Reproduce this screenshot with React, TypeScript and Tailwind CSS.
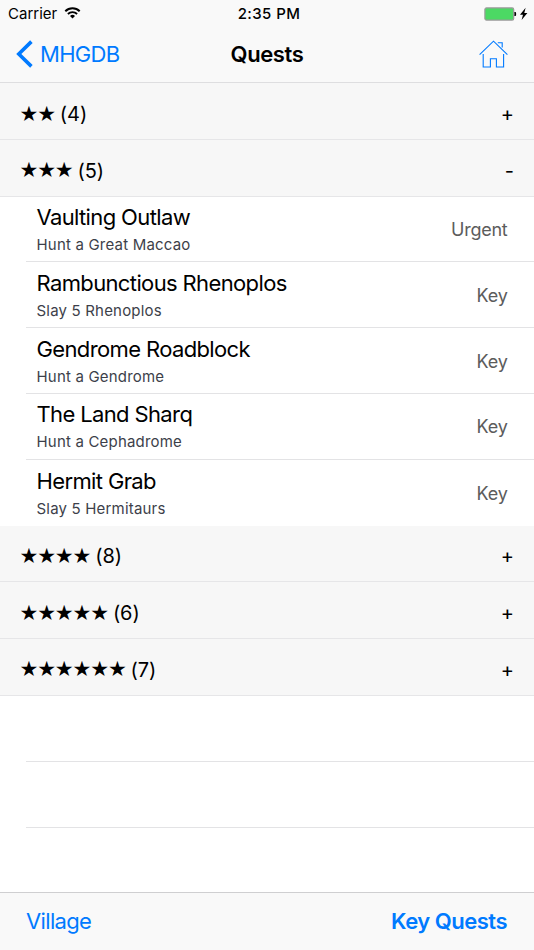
import React, { useState } from 'react';

interface Quest {
  name: string;
  goal: string;
  type: 'Key' | 'Urgent';
}

interface Section {
  stars: number;
  count: number;
  quests: Quest[];
}

const sections: Section[] = [
  { stars: 2, count: 4, quests: [] },
  {
    stars: 3,
    count: 5,
    quests: [
      { name: 'Vaulting Outlaw', goal: 'Hunt a Great Maccao', type: 'Urgent' },
      { name: 'Rambunctious Rhenoplos', goal: 'Slay 5 Rhenoplos', type: 'Key' },
      { name: 'Gendrome Roadblock', goal: 'Hunt a Gendrome', type: 'Key' },
      { name: 'The Land Sharq', goal: 'Hunt a Cephadrome', type: 'Key' },
      { name: 'Hermit Grab', goal: 'Slay 5 Hermitaurs', type: 'Key' },
    ],
  },
  { stars: 4, count: 8, quests: [] },
  { stars: 5, count: 6, quests: [] },
  { stars: 6, count: 7, quests: [] },
];

const StatusBar: React.FC = () => (
  <div className="grid h-[27px] grid-cols-3 items-center pl-2 pr-[6px] text-[15px] leading-none">
    <div className="flex items-center gap-[7px]">
      <span>Carrier</span>
      <svg className="-mt-[2px] h-[12px] w-[17px]" viewBox="0 0 16 12" fill="none" stroke="#000">
        <path d="M.8 4.2a10.3 10.3 0 0 1 14.4 0" strokeWidth="2" />
        <path d="M3.4 7a6.5 6.5 0 0 1 9.2 0" strokeWidth="1.8" />
        <path d="M8 11.6 5.5 9a3.6 3.6 0 0 1 5 0z" fill="#000" stroke="none" />
      </svg>
    </div>
    <span className="pl-[2px] text-center font-medium tracking-[0.4px]">2:35 PM</span>
    <div className="flex items-center justify-end">
      <svg className="h-[14px] w-[44px]" viewBox="0 0 44 14">
        <rect x=".9" y=".9" width="28.8" height="12.2" rx="1.6" fill="#4cd964" stroke="#999" strokeWidth="1.2" />
        <path d="M30.4 5h.8q.9 0 .9 1v2q0 1-.9 1h-.8z" fill="#000" />
        <path d="M41.6 .8 36 7.8h3L37.6 13 43.4 6h-3.1z" fill="#000" />
      </svg>
    </div>
  </div>
);

const NavBar: React.FC = () => (
  <div className="grid h-[54px] grid-cols-[1fr_auto_1fr] items-center pl-4 pr-4 text-[22px] leading-none">
    <button type="button" className="flex items-center gap-[7px] text-[#007aff]">
      <svg className="h-[28px] w-[17px]" viewBox="0 0 17 28" fill="none" stroke="currentColor" strokeWidth="3.6">
        <path d="M15.4 1.6 2.8 14l12.6 12.4" />
      </svg>
      <span className="tracking-[-0.7px]">MHGDB</span>
    </button>
    <h1 className="text-center font-semibold tracking-[-0.4px]">Quests</h1>
    <button type="button" aria-label="Home" className="mr-[10px] justify-self-end text-[#007aff]">
      <svg className="h-[28px] w-[29px]" viewBox="0 0 29 28" fill="none" stroke="currentColor" strokeWidth="1.1">
        <path d="M.6 14.6 14.5 1.2l13.9 13.4" />
        <path d="M4.2 14v13h7.2v-8.2h6V27h7.2V14" />
        <path d="M18.8 2.8h4.4v4.6" />
      </svg>
    </button>
  </div>
);

const QuestRow: React.FC<{ quest: Quest; last: boolean }> = ({ quest, last }) => (
  <div
    className={`ml-[26px] flex h-[65.8px] items-center justify-between pl-[10.5px] pr-[26.5px] pt-[1px] ${
      last ? '' : 'border-b border-[#e3e3e5]'
    }`}
  >
    <div className="flex flex-col">
      <span className="-mt-[1px] text-[22px] leading-[28px] tracking-[-0.63px]">{quest.name}</span>
      <span className="mt-[4px] text-[15px] leading-[20px] tracking-[0.19px] text-[#3d3f4a]">{quest.goal}</span>
    </div>
    <span className="text-[18px] tracking-[-0.25px] text-[#5c5c5c]">{quest.type}</span>
  </div>
);

export default function App() {
  const [openStars, setOpenStars] = useState(3);

  return (
    <div className="flex h-[950px] w-[534px] flex-col overflow-hidden bg-white font-['Inter',sans-serif] text-black">
      <header className="h-[83.2px] shrink-0 border-b border-[#dedee0] bg-[#f9f9f9]">
        <StatusBar />
        <NavBar />
      </header>

      <main className="min-h-0 flex-1 overflow-hidden">
        {sections.map((section) => {
          const isOpen = section.stars === openStars;
          return (
            <section key={section.stars}>
              <button
                type="button"
                onClick={() => setOpenStars(isOpen ? 0 : section.stars)}
                className="flex h-[56.7px] w-full items-center justify-between border-b border-[#e6e6e8] bg-[#f7f7f7] pl-[19.5px] pr-5 pt-[6px]"
              >
                <span className="flex items-center text-[20px] leading-none">
                  <span className="font-['DejaVu_Sans',sans-serif] text-[21px] leading-none tracking-[-1.15px]">
                    {'★'.repeat(section.stars)}
                  </span>
                  <span className="ml-[5px] tracking-[-0.1px]">({section.count})</span>
                </span>
                <span className="text-[20px] leading-none">{isOpen ? '-' : '+'}</span>
              </button>
              {isOpen &&
                section.quests.map((quest, index) => (
                  <QuestRow key={quest.name} quest={quest} last={index === section.quests.length - 1} />
                ))}
            </section>
          );
        })}
        <div className="ml-[26px] h-[66px] border-b border-[#e3e3e5]" />
        <div className="ml-[26px] h-[66px] border-b border-[#e3e3e5]" />
      </main>

      <footer className="flex h-[58px] shrink-0 items-center justify-between border-t border-[#cfcfd1] bg-[#f9f9f9] pl-[26px] pr-[27px] text-[22px] text-[#007aff]">
        <button type="button" className="tracking-[-0.65px]">Village</button>
        <button type="button" className="font-semibold tracking-[-0.5px]">Key Quests</button>
      </footer>
    </div>
  );
}
